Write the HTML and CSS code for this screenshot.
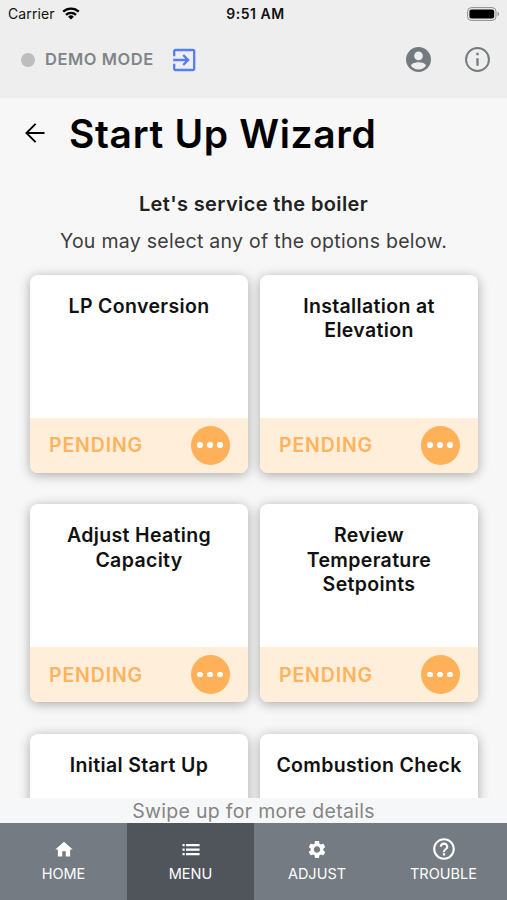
FILE: index.html
```html
<!DOCTYPE html>
<html lang="en">
<head>
<meta charset="utf-8">
<title>Start Up Wizard</title>
<link rel="stylesheet" href="styles.css">
</head>
<body>
<div class="app">
  <header class="top">
    <div class="status">
      <div class="carrier"><span class="carrier-name">Carrier</span>
        <svg class="wifi" viewBox="0 0 18 13"><g fill="none" stroke="#000" stroke-width="2.3"><path d="M1.2 4.7a11.2 11.2 0 0 1 15.6 0"/><path d="M4 7.9a7.1 7.1 0 0 1 10 0"/></g><path d="M9 12.6L6.1 9.7a4.1 4.1 0 0 1 5.8 0z"/></svg>
      </div>
      <div class="clock">9:51 AM</div>
      <div class="power"><svg class="battery" viewBox="0 0 33 14"><rect x=".6" y=".6" width="28.4" height="12.8" rx="3.8" fill="none" stroke="#8c8c8c" stroke-width="1"/><rect x="2.4" y="2.4" width="24.8" height="9.2" rx="2" fill="#000"/><path d="M30.6 4.8q1.5.7 1.5 2.2t-1.5 2.2z" fill="#8c8c8c"/></svg></div>
    </div>
    <div class="toolbar">
      <span class="dot"></span>
      <span class="mode">DEMO MODE</span>
      <svg class="exit" viewBox="0 0 24 24" fill="none" stroke="#567cf8" stroke-width="2.3"><path d="M2.200 8.200V3.400Q2.200 2 3.600 2H20.800Q22.200 2 22.200 3.400V20.600Q22.200 22 20.800 22H3.600Q2.200 22 2.200 20.600V15.800"/><path d="M1.200 12H16M11.200 7L16.200 12L11.200 17"/></svg>
      <svg class="user" viewBox="0 0 24 24" fill="#747a80"><path d="M12 0a12 12 0 1 0 0 24a12 12 0 0 0 0-24zm0 4.3a4.2 4.2 0 1 1 0 8.4a4.2 4.2 0 0 1 0-8.4zm0 17.3c-3 0-5.700-1.400-7.200-3.600c.1-2.200 4.800-3.300 7.200-3.300s7.100 1.100 7.200 3.300c-1.500 2.200-4.200 3.600-7.200 3.600z"/></svg>
      <svg class="info" viewBox="0 0 24 24"><circle cx="12" cy="12" r="11" fill="none" stroke="#747a80" stroke-width="1.900"/><path d="M10.900 5.600h2.200v2.200h-2.200zM10.900 10.700h2.200v7.200h-2.200z" fill="#747a80"/></svg>
    </div>
  </header>
  <main class="content">
    <div class="heading">
      <svg class="back" viewBox="0 0 20 20" fill="none" stroke="#000" stroke-width="1.900"><path d="M19.500 10H1.600M10.600 .8L1.400 10L10.600 19.200"/></svg>
      <h1 class="title">Start Up Wizard</h1>
    </div>
    <h2 class="lead">Let's service the boiler</h2>
    <p class="hint">You may select any of the options below.</p>
    <div class="cards">
      <article class="card"><h3 class="name">LP Conversion</h3><div class="state"><span class="pending">PENDING</span><span class="more"><i></i><i></i><i></i></span></div></article>
      <article class="card"><h3 class="name">Installation at<br>Elevation</h3><div class="state"><span class="pending">PENDING</span><span class="more"><i></i><i></i><i></i></span></div></article>
      <article class="card"><h3 class="name">Adjust Heating<br>Capacity</h3><div class="state"><span class="pending">PENDING</span><span class="more"><i></i><i></i><i></i></span></div></article>
      <article class="card"><h3 class="name">Review<br>Temperature<br>Setpoints</h3><div class="state"><span class="pending">PENDING</span><span class="more"><i></i><i></i><i></i></span></div></article>
      <article class="card"><h3 class="name">Initial Start Up</h3></article>
      <article class="card"><h3 class="name">Combustion Check</h3></article>
    </div>
  </main>
  <div class="swipe"><span class="swipe-text">Swipe up for more details</span></div>
  <nav class="tabs">
    <div class="tab"><svg class="icon" viewBox="0 0 24 24" fill="#fff"><path d="M10 20v-6h4v6h5v-8h3L12 3 2 12h3v8z"/></svg><span class="label home">HOME</span></div>
    <div class="tab active"><svg class="icon" viewBox="0 0 24 24" fill="#fff"><path d="M2.300 5.800h2.500v2.500H2.300zM2.300 10.900h2.500v2.500H2.300zM2.300 16h2.500v2.500H2.300zM6.300 5.800h15.500v2.500H6.300zM6.300 10.900h15.500v2.500H6.300zM6.300 16h15.500v2.500H6.300z"/></svg><span class="label">MENU</span></div>
    <div class="tab"><svg class="icon" viewBox="0 0 24 24" fill="#fff"><path d="M19.140 12.940c.04-.3.06-.61.06-.94 0-.32-.02-.64-.07-.94l2.030-1.580c.18-.14.23-.41.12-.61l-1.920-3.320c-.12-.22-.37-.29-.59-.22l-2.390.96c-.5-.38-1.030-.7-1.620-.94l-.36-2.540c-.04-.24-.24-.41-.48-.41h-3.840c-.24 0-.43.17-.47.41l-.36 2.540c-.59.24-1.130.57-1.620.94l-2.390-.96c-.22-.08-.47 0-.59.22L2.740 8.870c-.12.21-.08.47.12.61l2.030 1.580c-.05.3-.09.63-.09.94s.02.640.07.94l-2.030 1.580c-.18.14-.23.41-.12.61l1.920 3.320c.12.22.37.29.59.22l2.390-.96c.5.38 1.030.7 1.620.94l.36 2.540c.05.24.24.41.48.41h3.840c.24 0 .44-.17.470-.41l.36-2.540c.59-.24 1.130-.56 1.620-.94l2.390.96c.22.08.47 0 .59-.22l1.920-3.320c.12-.22.070-.47-.12-.61l-2.010-1.580zM12 15.600c-1.980 0-3.600-1.620-3.600-3.600s1.620-3.600 3.600-3.600 3.600 1.620 3.600 3.600-1.620 3.600-3.600 3.600z"/></svg><span class="label adjust">ADJUST</span></div>
    <div class="tab"><svg class="icon help" viewBox="0 0 24 24" fill="#fff"><path d="M11 18h2v-2h-2v2zm1-16C6.480 2 2 6.480 2 12s4.480 10 10 10 10-4.480 10-10S17.520 2 12 2zm0 18c-4.410 0-8-3.590-8-8s3.590-8 8-8 8 3.590 8 8-3.590 8-8 8zm0-14c-2.210 0-4 1.790-4 4h2c0-1.100.9-2 2-2s2 .9 2 2c0 2-3 1.750-3 5h2c0-2.250 3-2.500 3-5 0-2.210-1.790-4-4-4z"/></svg><span class="label trouble">TROUBLE</span></div>
  </nav>
</div>
</body>
</html>
```
FILE: styles.css
```css
* { box-sizing: border-box; }
body { margin: 0; font-family: Inter, "Liberation Sans", sans-serif; background: #f7f7f7; }
h1, h2, h3, p { margin: 0; }
svg { display: block; flex: none; }
.app { width: 507px; height: 900px; display: flex; flex-direction: column; overflow: hidden; }

.top { height: 98px; flex: none; background: #eee; }
.status { height: 27px; display: grid; grid-template-columns: 1fr auto 1fr; align-items: center; padding: 0 7px 0 8px; color: #111; }
.carrier { display: flex; align-items: center; gap: 7px; font-size: 14px; letter-spacing: .1px; }
.wifi { width: 18px; height: 13px; }
.clock { padding-left: 3px; font-size: 14px; font-weight: 600; letter-spacing: .5px; }
.power { display: flex; justify-content: flex-end; }
.battery { width: 33px; height: 14px; }
.toolbar { display: flex; align-items: center; height: 65px; padding: 0 17px 0 21px; }
.dot { width: 14px; height: 14px; border-radius: 50%; background: #bdbdbd; }
.mode { margin: -1px 0 0 10px; width: 128px; font-size: 16.5px; font-weight: 600; letter-spacing: .55px; color: #808588; }
.exit { width: 24px; height: 24px; margin-left: -1px; }
.user { width: 25px; height: 25px; margin-left: auto; }
.info { width: 25px; height: 25px; margin-left: 34px; }

.content { flex: 1; min-height: 0; overflow: hidden; background: #f7f7f7; }
.heading { height: 70px; display: flex; align-items: center; padding-left: 25px; }
.back { width: 20px; height: 20px; }
.title { margin: 1px 0 0 24px; font-size: 39px; font-weight: 600; line-height: 48px; letter-spacing: .65px; white-space: nowrap; }
.lead { margin-top: 23px; text-align: center; font-size: 20px; line-height: 26px; font-weight: 600; letter-spacing: .37px; color: #212121; }
.hint { margin-top: 11px; text-align: center; font-size: 19.5px; line-height: 26px; letter-spacing: .27px; color: #3d3d3d; white-space: nowrap; }
.cards { margin-top: 20.5px; padding: 0 29px 0 30px; display: grid; grid-template-columns: 218px 218px; column-gap: 12px; row-gap: 31.6px; }
.card { height: 198px; display: flex; flex-direction: column; justify-content: space-between; border-radius: 8px; background: #fff; overflow: hidden; box-shadow: 0 2px 12px rgba(0, 0, 0, .32); }
.name { padding-top: 19px; text-align: center; font-size: 19.5px; line-height: 24.4px; font-weight: 600; letter-spacing: .35px; color: #111; white-space: nowrap; }
.state { height: 55px; display: flex; align-items: center; justify-content: space-between; padding: 0 18.5px 0 19px; background: #ffeeda; }
.pending { font-size: 19.5px; font-weight: 600; letter-spacing: .85px; color: #ffb35c; }
.more { width: 39px; height: 39px; border-radius: 50%; background: #ffb159; display: flex; align-items: center; justify-content: center; gap: 4.3px; }
.more i { width: 5.5px; height: 5.5px; border-radius: 50%; background: #fff; }

.swipe { height: 25px; flex: none; text-align: center; background: #f6f7f9; font-size: 19.5px; line-height: 26px; letter-spacing: .3px; color: #858585; }
.tabs { height: 77px; flex: none; display: grid; grid-template-columns: 127px 127px 126px 127px; background: #747b82; }
.tab { display: flex; flex-direction: column; align-items: center; padding-top: 16px; color: #fff; }
.active { background: #50545b; }
.icon { width: 22px; height: 21px; }
.help { width: 26px; height: 26px; margin: -3px 0 -2px; }
.label { margin-top: 5px; font-size: 14.5px; line-height: 18px; }
```
